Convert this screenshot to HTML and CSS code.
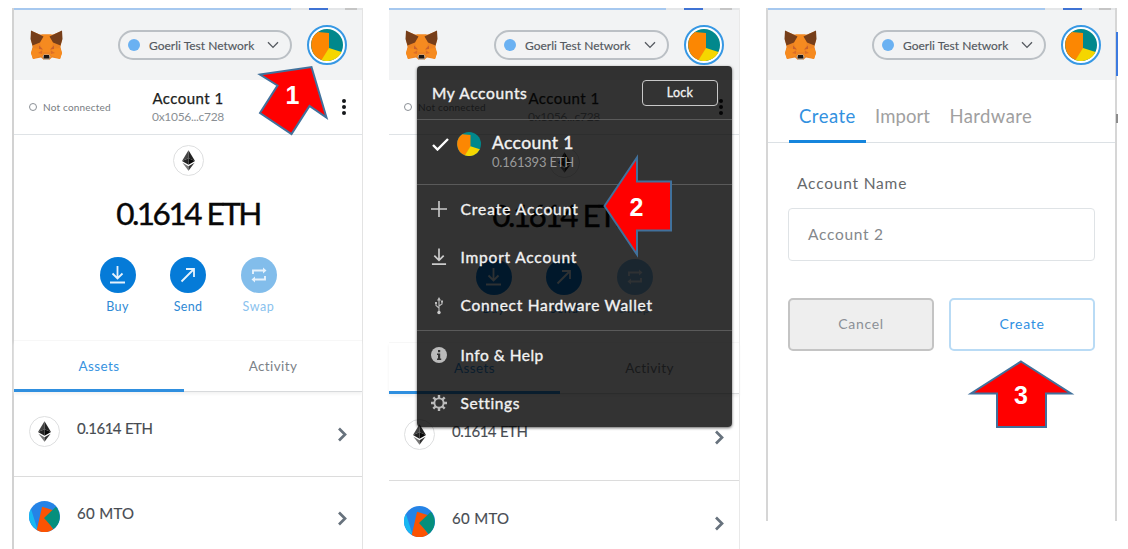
FILE: index.html
```html
<!DOCTYPE html>
<html lang="en">
<head>
<meta charset="utf-8">
<title>Create an account</title>
<link rel="stylesheet" href="styles.css">
</head>
<body>
<svg class="defs" aria-hidden="true">
  <symbol id="fox" viewBox="0 0 33 31">
    <path fill="#ed8322" d="M1 1 10 4.500H23L32 1 32 9 30.500 17 32 23 30 29 22 27.500 19 30H14L11 27.500 3 29 1 23 2.500 17 1 9Z"/>
    <path fill="#f58a20" d="M12 4.500H21L23 13 20 22H13L10 13Z"/>
    <path fill="#763e1a" d="M1 .5 13.500 6.500 10 12.500 2.500 15.500 .5 9ZM32 .5 19.500 6.500 23 12.500 30.500 15.500 32.500 9Z"/>
    <path fill="#f68a1f" d="M1 23 3 18 11 19 13 25 3 29ZM32 23 30 18 22 19 20 25 30 29Z"/>
    <path fill="#c9602c" d="M9 15.500 13 19.500 9 19ZM24 15.500 20 19.500 24 19Z"/>
    <path fill="#dc6d28" d="M8 23 12 20.500 12 24ZM25 23 21 20.500 21 24Z"/>
    <path fill="#c9b8a6" d="M12.500 26.500 14 24.500H19L20.500 26.500 19 30H14Z"/>
    <path fill="#1d1613" d="M14 25H19L19.500 28.500H13.500Z"/>
  </symbol>
  <symbol id="avatar" viewBox="0 0 32 32">
    <circle cx="16" cy="16" r="16" fill="#01888c"/>
    <path fill="#fc8702" d="M18 4 7 3A16 16 0 0 0 11 31.200L18 20Z"/>
    <path fill="#f5d600" d="M18 19 30.500 23A16 16 0 0 1 10.500 31Z"/>
  </symbol>
  <symbol id="eth" viewBox="0 0 14 22">
    <path fill="#444" d="M7 0 0 11.500 7 8.500Z"/><path fill="#222" d="M7 0 14 11.500 7 8.500Z"/>
    <path fill="#222" d="M0 11.500 7 8.500V15.500Z"/><path fill="#080808" d="M14 11.500 7 8.500V15.500Z"/>
    <path fill="#777" d="M.5 13.500 7 17.200V22Z"/><path fill="#333" d="M13.500 13.500 7 17.200V22Z"/>
  </symbol>
  <symbol id="mto" viewBox="0 0 32 32">
    <circle cx="16" cy="16" r="16" fill="#2583e6"/>
    <path fill="#18b8f2" d="M2 8 9 30A16 16 0 0 1 2 8Z"/>
    <path fill="#fb5303" d="M13.500 6 25 9.500 17 17 25 29.200A16 16 0 0 1 8 30Z"/>
    <path fill="#068f7c" d="M15.500 17.500 27.800 6A16 16 0 0 1 25.500 29Z"/>
  </symbol>
  <symbol id="download" viewBox="0 0 17 18">
    <path fill="none" stroke="currentColor" stroke-width="1.800" d="M8.500 0V12M3.500 7.500 8.500 12.500 13.500 7.500M1 16.500H16"/>
  </symbol>
  <symbol id="send" viewBox="0 0 16 16">
    <path fill="none" stroke="currentColor" stroke-width="1.800" d="M1.500 14.500 14 2M6 2H14V10"/>
  </symbol>
  <symbol id="swap" viewBox="0 0 16 16">
    <path fill="none" stroke="currentColor" stroke-width="1.900" d="M2 7V3.500H13M14 9V12.500H3"/>
    <path fill="currentColor" d="M12 .5 15.500 3.500 12 6.500ZM4 9.500 .5 12.500 4 15.500Z"/>
  </symbol>
  <symbol id="chevron" viewBox="0 0 10 15">
    <path fill="none" stroke="currentColor" stroke-width="2.700" d="M2 1.500 8 7.500 2 13.500"/>
  </symbol>
  <symbol id="down" viewBox="0 0 12 8">
    <path fill="none" stroke="currentColor" stroke-width="1.300" d="M1 1.200 6 6.400 11 1.200"/>
  </symbol>
</svg>

<main class="stage">
  <section class="panel panel-home">
    <div class="strip"><i class="strip-line"></i><i class="strip-dash"></i><i class="strip-end"></i></div>
    <header class="header">
      <svg class="fox"><use href="#fox"/></svg>
      <div class="network"><i class="dot"></i><span>Goerli Test Network</span><svg class="down"><use href="#down"/></svg></div>
      <div class="avatar-ring"><svg><use href="#avatar"/></svg></div>
    </header>
    <div class="account-bar">
      <div class="status"><i class="ring"></i><span>Not connected</span></div>
      <div class="account"><b class="account-name">Account 1</b><span class="account-address">0x1056...c728</span></div>
      <div class="kebab"><i></i><i></i><i></i></div>
    </div>
    <div class="balance">
      <div class="coin"><svg class="eth"><use href="#eth"/></svg></div>
      <div class="amount">0.1614 ETH</div>
      <div class="actions">
        <div class="action"><span class="disc"><svg class="i-download"><use href="#download"/></svg></span><span class="label">Buy</span></div>
        <div class="action"><span class="disc"><svg class="i-send"><use href="#send"/></svg></span><span class="label">Send</span></div>
        <div class="action is-off"><span class="disc"><svg class="i-swap"><use href="#swap"/></svg></span><span class="label">Swap</span></div>
      </div>
    </div>
    <div class="tabs"><div class="tab is-active">Assets</div><div class="tab">Activity</div></div>
    <div class="asset"><div class="coin"><svg class="eth"><use href="#eth"/></svg></div><span class="asset-name">0.1614 ETH</span><svg class="chevron"><use href="#chevron"/></svg></div>
    <div class="asset"><svg class="token"><use href="#mto"/></svg><span class="asset-name mto-name">60 MTO</span><svg class="chevron"><use href="#chevron"/></svg></div>
  </section>

  <section class="panel panel-menu">
    <div class="strip"><i class="strip-line"></i><i class="strip-dash"></i><i class="strip-end"></i></div>
    <header class="header">
      <svg class="fox"><use href="#fox"/></svg>
      <div class="network"><i class="dot"></i><span>Goerli Test Network</span><svg class="down"><use href="#down"/></svg></div>
      <div class="avatar-ring"><svg><use href="#avatar"/></svg></div>
    </header>
    <div class="account-bar">
      <div class="status"><i class="ring"></i><span>Not connected</span></div>
      <div class="account"><b class="account-name">Account 1</b><span class="account-address">0x1056...c728</span></div>
      <div class="kebab"><i></i><i></i><i></i></div>
    </div>
    <div class="balance">
      <div class="coin"><svg class="eth"><use href="#eth"/></svg></div>
      <div class="amount">0.1614 ETH</div>
      <div class="actions">
        <div class="action"><span class="disc"><svg class="i-download"><use href="#download"/></svg></span><span class="label">Buy</span></div>
        <div class="action"><span class="disc"><svg class="i-send"><use href="#send"/></svg></span><span class="label">Send</span></div>
        <div class="action is-off"><span class="disc"><svg class="i-swap"><use href="#swap"/></svg></span><span class="label">Swap</span></div>
      </div>
    </div>
    <div class="tabs"><div class="tab is-active">Assets</div><div class="tab">Activity</div></div>
    <div class="asset"><div class="coin"><svg class="eth"><use href="#eth"/></svg></div><span class="asset-name">0.1614 ETH</span><svg class="chevron"><use href="#chevron"/></svg></div>
    <div class="asset"><svg class="token"><use href="#mto"/></svg><span class="asset-name mto-name">60 MTO</span><svg class="chevron"><use href="#chevron"/></svg></div>

    <nav class="menu">
      <div class="menu-head"><span class="menu-title">My Accounts</span><button class="lock">Lock</button></div>
      <div class="menu-account">
        <svg class="check" viewBox="0 0 17 13"><path fill="none" stroke="#fff" stroke-width="2.400" d="M1 7 5.500 11.500 16 1"/></svg>
        <svg class="menu-avatar"><use href="#avatar"/></svg>
        <div class="menu-account-text"><span class="menu-account-name">Account 1</span><span class="menu-account-eth">0.161393 ETH</span></div>
      </div>
      <div class="menu-group">
        <div class="menu-item"><svg viewBox="0 0 16 18"><path stroke="#ccc" stroke-width="1.600" d="M8 1V17M0 9H16"/></svg><span class="t-create">Create Account</span></div>
        <div class="menu-item"><svg><use href="#download"/></svg><span class="t-import">Import Account</span></div>
        <div class="menu-item"><svg viewBox="0 0 16 18"><path fill="none" stroke="#bbb" stroke-width="1.100" d="M8 3V15M8 11 5 8.500V6M8 9 11 7V4.500"/><path fill="#bbb" d="M8 0 10 3.500H6ZM4 5H6V7H4ZM10 3.500H12V5.500H10Z"/><circle cx="8" cy="15.500" r="1.700" fill="#ccc"/></svg><span class="t-connect">Connect Hardware Wallet</span></div>
      </div>
      <div class="menu-group">
        <div class="menu-item"><svg viewBox="0 0 16 18"><circle cx="8" cy="9" r="8" fill="#bbb"/><path fill="#333" d="M7 4H9.200V6.200H7ZM6 7.500H9.200V12.500H10.200V14H6V12.500H7V9H6Z"/></svg><span class="t-info">Info &amp; Help</span></div>
        <div class="menu-item"><svg viewBox="0 0 16 18"><circle cx="8" cy="9" r="4.600" fill="none" stroke="#bbb" stroke-width="1.900"/><g stroke="#bbb" stroke-width="2.400"><path d="M8 1V4M8 14V17M0 9H3M13 9H16M2.300 3.300 4.500 5.500M11.500 12.500 13.700 14.700M2.300 14.700 4.500 12.500M11.500 5.500 13.700 3.300"/></g></svg><span class="t-settings">Settings</span></div>
      </div>
    </nav>
  </section>

  <section class="panel panel-create">
    <div class="strip"><i class="strip-line"></i><i class="strip-dash"></i><i class="strip-end"></i></div>
    <header class="header">
      <svg class="fox"><use href="#fox"/></svg>
      <div class="network"><i class="dot"></i><span>Goerli Test Network</span><svg class="down"><use href="#down"/></svg></div>
      <div class="avatar-ring"><svg><use href="#avatar"/></svg></div>
    </header>
    <div class="form-tabs"><div class="form-tab is-active">Create</div><div class="form-tab tab-import">Import</div><div class="form-tab tab-hardware">Hardware</div></div>
    <div class="form">
      <div class="form-label">Account Name</div>
      <div class="form-input">Account 2</div>
      <div class="form-buttons"><button class="btn btn-cancel">Cancel</button><button class="btn btn-create">Create</button></div>
    </div>
    <i class="edge-accent"></i>
    <i class="edge-mark"></i>
  </section>

  <svg class="arrows" viewBox="0 0 1128 549">
    <g fill="#f00" stroke="#41719c" stroke-width="2">
      <path d="M260 74.500 311.500 67 326.500 117.500 309.500 106 291.500 134 260 113 277.500 85.500Z"/>
      <path d="M604.500 206 637 157.500V181.500H671V230.500H637V254.500Z"/>
      <path d="M1021 361.500 1071 393.500H1046V427H997V393.500H971Z"/>
    </g>
    <g class="arrow-number"><text x="292.500" y="104">1</text><text x="636.500" y="215.500">2</text><text x="1021" y="403.500">3</text></g>
  </svg>
</main>
</body>
</html>
```

FILE: styles.css
```css
* { box-sizing: border-box; }
body { margin: 0; background: #fff; font-family: Lato, "Open Sans", sans-serif; }
.defs { position: absolute; width: 0; height: 0; }
svg { display: block; flex: none; }
i { display: block; flex: none; }

.stage { position: relative; display: flex; gap: 26px; width: 1128px; height: 549px; padding: 8px 0 0 12px; overflow: hidden; }
.panel { position: relative; width: 351px; height: 541px; flex: none; display: flex; flex-direction: column; }
.panel-home { border-left: 2px solid #d2d2d2; border-right: 1px solid #e3e3e3; }
.panel-menu { border-right: 1px solid #e9e9e9; }
.panel-create { height: 513px; border-left: 2px solid #d6d6d6; border-right: 2px solid #d6d6d6; }

.strip { display: flex; height: 2px; flex: none; background: #e4e6e8; }
.strip-line { width: 277px; background: #a6c8ef; }
.strip-dash { width: 19px; margin-left: 18px; background: #3f73d4; }
.strip-end { width: 12px; margin-left: 17px; background: #c5c5c5; }

.header { display: flex; align-items: center; height: 70px; flex: none; padding: 0 15px 0 16px; background: #f2f3f4; }
.panel-menu .header { padding-left: 16px; padding-right: 15px; }
.panel-create .header { padding-left: 16px; padding-right: 14px; }
.fox { width: 33px; height: 31px; }
.network { display: flex; align-items: center; width: 174px; height: 30px; margin-left: auto; padding: 0 11px 0 8px; border: 2px solid #bbc0c5; border-radius: 15px; color: #54595f; font-size: 12px; white-space: nowrap; -webkit-text-stroke: .15px #54595f; }
.panel-menu .network { width: 175px; }
.dot { width: 12px; height: 12px; margin-right: 9px; border-radius: 50%; background: #6ab1f2; }
.down { width: 12px; height: 8px; margin-left: auto; }
.avatar-ring { width: 40px; height: 40px; margin-left: 15px; padding: 2px; border: 2px solid #3798e4; border-radius: 50%; background: #fff; flex: none; }
.avatar-ring svg { width: 32px; height: 32px; }

.account-bar { display: grid; grid-template-columns: 1fr auto 1fr; align-items: center; height: 55px; flex: none; padding: 0 15px; border-bottom: 1px solid #dfe3e6; }
.status { display: flex; align-items: center; gap: 6px; color: #777c81; font-size: 10px; letter-spacing: .2px; }
.ring { width: 8px; height: 8px; border: 1.500px solid #8b9096; border-radius: 50%; }
.account { display: flex; flex-direction: column; align-items: center; }
.account-name { font-size: 15px; line-height: 19px; font-weight: 400; letter-spacing: .45px; color: #1c1e20; -webkit-text-stroke: .25px #1c1e20; }
.account-address { font-size: 12px; line-height: 17px; letter-spacing: -.3px; color: #8a8f94; }
.kebab { display: flex; flex-direction: column; gap: 1.500px; justify-self: end; margin-right: 1px; }
.kebab i { width: 4.500px; height: 4.500px; border-radius: 50%; background: #15171a; }

.balance { display: flex; flex-direction: column; align-items: center; height: 206px; flex: none; padding-top: 10px; border-bottom: 1px solid #f7f7f7; }
.panel-menu .balance { height: 208px; padding-top: 12px; }
.coin { display: flex; align-items: center; justify-content: center; width: 31px; height: 31px; border: 1px solid #dedfe0; border-radius: 50%; background: #fff; flex: none; }
.eth { width: 13px; height: 21px; }
.amount { margin-top: 18px; font-size: 31.500px; line-height: 38px; letter-spacing: -2.500px; word-spacing: 1px; color: #080808; -webkit-text-stroke: .4px #080808; }
.actions { display: flex; gap: 20.500px; margin-top: 25px; }
.action { display: flex; flex-direction: column; align-items: center; width: 50px; color: #0579d7; }
.disc { display: flex; align-items: center; justify-content: center; width: 36px; height: 36px; border-radius: 50%; background: #057bd8; color: #e6f2fc; }
.is-off .disc { background: #82bdeb; }
.is-off .label { color: #8ac2ee; letter-spacing: .6px; }
.label { margin-top: 6px; font-size: 12.500px; line-height: 16px; letter-spacing: .3px; color: #2f89d4; }
.i-download { width: 17px; height: 18px; }
.i-send, .i-swap { width: 16px; height: 16px; }

.tabs { display: grid; grid-template-columns: 170px 1fr; height: 51px; flex: none; border-bottom: 1px solid #d8dadc; box-shadow: 0 2px 3px #f2f2f2; }
.panel-menu .tabs { grid-template-columns: 171px 1fr; }
.tab { height: 51px; text-align: center; font-size: 13.500px; line-height: 50px; letter-spacing: .4px; color: #7c8288; }
.tab.is-active { border-bottom: 3px solid #2f8fdf; color: #3793df; }

.asset { display: flex; align-items: flex-start; height: 85px; flex: none; padding: 24px 15px 0; border-bottom: 1px solid #dcdcdc; }
.panel-menu .asset { height: 87px; padding-top: 25px; }
.token { width: 31px; height: 31px; }
.asset-name { margin: 3px 0 0 17px; font-size: 15px; line-height: 18px; letter-spacing: -.5px; word-spacing: .5px; color: #474c52; -webkit-text-stroke: .15px #474c52; }
.mto-name { margin-top: 2.500px; letter-spacing: .2px; }
.chevron { width: 10px; height: 15px; margin: 11px 0 0 auto; color: #67727d; }
.asset:last-of-type .chevron { margin-top: 10px; }

.menu { position: absolute; left: 28px; top: 58px; width: 315px; height: 361px; border-radius: 4px; background: rgba(0,0,0,.8); box-shadow: 0 1px 3px rgba(0,0,0,.6); color: #f2f2f2; }
.menu-head { display: flex; align-items: center; justify-content: space-between; height: 54px; padding: 0 14px 0 15px; border-bottom: 1px solid #5a5a5a; }
.menu-title { font-size: 15.500px; letter-spacing: .65px; -webkit-text-stroke: .4px #f2f2f2; }
.lock { width: 76px; height: 26px; padding: 0; border: 1px solid #c8c8c8; border-radius: 4px; background: transparent; color: #f2f2f2; font: 12.500px Lato, sans-serif; letter-spacing: .3px; -webkit-text-stroke: .3px #f2f2f2; }
.menu-account { display: flex; align-items: flex-start; height: 65px; padding: 11px 15px 0; border-bottom: 1px solid #5a5a5a; }
.check { width: 17px; height: 13px; margin-top: 7px; }
.menu-avatar { width: 24px; height: 24px; margin: 1px 0 0 8px; }
.menu-account-text { display: flex; flex-direction: column; margin-left: 11px; }
.menu-account-name { font-size: 17.500px; line-height: 24px; letter-spacing: .4px; -webkit-text-stroke: .4px #f2f2f2; }
.menu-account-eth { font-size: 13px; line-height: 14px; letter-spacing: -.2px; color: #9a9a9a; }
.menu-group + .menu-group { border-top: 1px solid #5a5a5a; }
.menu-item { display: flex; align-items: center; gap: 13.500px; height: 48.300px; padding-left: 14px; font-size: 15.500px; line-height: 18px; white-space: nowrap; -webkit-text-stroke: .35px #f2f2f2; }
.menu-item svg { width: 16px; height: 18px; color: #ccc; -webkit-text-stroke: 0; }
.menu-item span { margin-top: -1px; }
.t-create { letter-spacing: .95px; }
.t-import { letter-spacing: .8px; }
.t-connect { letter-spacing: .72px; }
.t-info { letter-spacing: .5px; }
.t-settings { letter-spacing: .6px; }

.form-tabs { display: flex; height: 63px; flex: none; padding-left: 21px; border-bottom: 1px solid #dce1e5; }
.form-tab { height: 63px; font-size: 18.500px; line-height: 72px; color: #a0a0a0; }
.form-tab.is-active { width: 77px; padding-left: 10px; border-bottom: 3px solid #1585dd; color: #3291df; letter-spacing: .5px; }
.tab-import { width: 74px; padding-left: 9px; letter-spacing: .1px; }
.tab-hardware { padding-left: 9.500px; letter-spacing: .4px; }
.form { padding: 31px 20px 0; }
.form-label { padding-left: 9px; font-size: 15.500px; line-height: 18px; margin-bottom: 16px; letter-spacing: .8px; color: #66696c; }
.form-input { height: 53px; padding-left: 19px; border: 1px solid #dfe3e6; border-radius: 4px; font-size: 15.500px; line-height: 51px; letter-spacing: .7px; color: #84888c; }
.form-buttons { display: grid; grid-template-columns: 146px 146px; justify-content: space-between; margin-top: 37px; }
.btn { height: 53px; padding: 0 0 2px; border-radius: 5px; font: 14px Lato, sans-serif; letter-spacing: .7px; }
.btn-cancel { border: 2px solid #c4c4c4; background: #eee; color: #8b9096; }
.btn-create { border: 2px solid #b9dbf5; background: #fff; color: #2f90e2; }
.edge-accent { position: absolute; right: -3px; top: 24px; width: 2px; height: 44px; background: #3c7ae0; }
.edge-mark { position: absolute; right: -3px; top: 106px; width: 2px; height: 9px; background: #8c8c8c; }

.arrows { position: absolute; left: 0; top: 0; width: 1128px; height: 549px; pointer-events: none; }
.arrow-number { fill: #fff; font: bold 25px "Liberation Sans", Arial, sans-serif; text-anchor: middle; }
```
